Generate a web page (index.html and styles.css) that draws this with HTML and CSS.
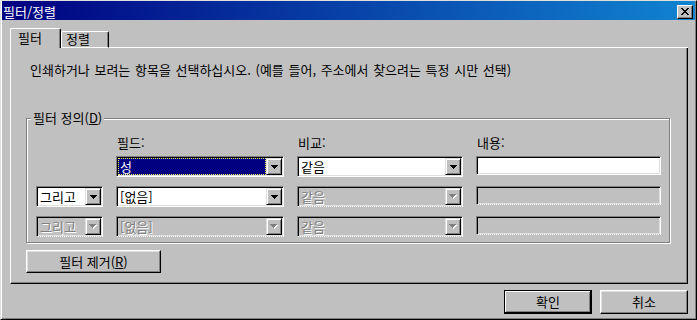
FILE: index.html
```html
<!DOCTYPE html>
<html lang="ko">
<head>
    <meta charset="UTF-8">
    <title>필터/정렬</title>
    <link rel="stylesheet" href="styles.css">
</head>
<body>
    <div class="window">
        <div class="titlebar">
            <span class="title">필터/정렬</span>
            <span class="close-btn">
                <svg width="8" height="7" viewBox="0 0 8 7" shape-rendering="crispEdges"><path fill="#000" d="M0 0h2v1H0zM6 0h2v1H6zM1 1h2v1H1zM5 1h2v1H5zM2 2h4v1H2zM3 3h2v1H3zM2 4h4v1H2zM1 5h2v1H1zM5 5h2v1H5zM0 6h2v1H0zM6 6h2v1H6z"/></svg>
            </span>
        </div>

        <div class="dialog-body">
            <div class="tabs">
                <div class="tab active">필터</div>
                <div class="tab">정렬</div>
                <div class="tab-fill"></div>
            </div>

            <div class="panel">
                <p class="hint">인쇄하거나 보려는 항목을 선택하십시오. (예를 들어, 주소에서 찾으려는 특정 시만 선택)</p>

                <div class="groupbox">
                    <span class="groupbox-title">필터 정의(<u>D</u>)</span>
                    <div class="filter-grid">
                        <span></span>
                        <span class="col-label">필드:</span>
                        <span class="col-label">비교:</span>
                        <span class="col-label">내용:</span>

                        <span></span>
                        <div class="combo focused">
                            <span class="combo-text"><span class="sel">성</span></span>
                            <span class="drop"><svg width="7" height="4" viewBox="0 0 7 4" shape-rendering="crispEdges"><path fill="#000" d="M0 0h7v1H0zM1 1h5v1H1zM2 2h3v1H2zM3 3h1v1H3z"/></svg></span>
                        </div>
                        <div class="combo">
                            <span class="combo-text">같음</span>
                            <span class="drop"><svg width="7" height="4" viewBox="0 0 7 4" shape-rendering="crispEdges"><path fill="#000" d="M0 0h7v1H0zM1 1h5v1H1zM2 2h3v1H2zM3 3h1v1H3z"/></svg></span>
                        </div>
                        <div class="textbox"></div>

                        <div class="combo">
                            <span class="combo-text">그리고</span>
                            <span class="drop"><svg width="7" height="4" viewBox="0 0 7 4" shape-rendering="crispEdges"><path fill="#000" d="M0 0h7v1H0zM1 1h5v1H1zM2 2h3v1H2zM3 3h1v1H3z"/></svg></span>
                        </div>
                        <div class="combo">
                            <span class="combo-text">[없음]</span>
                            <span class="drop"><svg width="7" height="4" viewBox="0 0 7 4" shape-rendering="crispEdges"><path fill="#000" d="M0 0h7v1H0zM1 1h5v1H1zM2 2h3v1H2zM3 3h1v1H3z"/></svg></span>
                        </div>
                        <div class="combo disabled">
                            <span class="combo-text">같음</span>
                            <span class="drop"><svg width="8" height="5" viewBox="0 0 8 5" shape-rendering="crispEdges"><path fill="#fff" d="M1 1h7v1H1zM2 2h5v1H2zM3 3h3v1H3zM4 4h1v1H4z"/><path fill="#808080" d="M0 0h7v1H0zM1 1h5v1H1zM2 2h3v1H2zM3 3h1v1H3z"/></svg></span>
                        </div>
                        <div class="textbox disabled"></div>

                        <div class="combo disabled">
                            <span class="combo-text">그리고</span>
                            <span class="drop"><svg width="8" height="5" viewBox="0 0 8 5" shape-rendering="crispEdges"><path fill="#fff" d="M1 1h7v1H1zM2 2h5v1H2zM3 3h3v1H3zM4 4h1v1H4z"/><path fill="#808080" d="M0 0h7v1H0zM1 1h5v1H1zM2 2h3v1H2zM3 3h1v1H3z"/></svg></span>
                        </div>
                        <div class="combo disabled">
                            <span class="combo-text">[없음]</span>
                            <span class="drop"><svg width="8" height="5" viewBox="0 0 8 5" shape-rendering="crispEdges"><path fill="#fff" d="M1 1h7v1H1zM2 2h5v1H2zM3 3h3v1H3zM4 4h1v1H4z"/><path fill="#808080" d="M0 0h7v1H0zM1 1h5v1H1zM2 2h3v1H2zM3 3h1v1H3z"/></svg></span>
                        </div>
                        <div class="combo disabled">
                            <span class="combo-text">같음</span>
                            <span class="drop"><svg width="8" height="5" viewBox="0 0 8 5" shape-rendering="crispEdges"><path fill="#fff" d="M1 1h7v1H1zM2 2h5v1H2zM3 3h3v1H3zM4 4h1v1H4z"/><path fill="#808080" d="M0 0h7v1H0zM1 1h5v1H1zM2 2h3v1H2zM3 3h1v1H3z"/></svg></span>
                        </div>
                        <div class="textbox disabled"></div>
                    </div>
                </div>

                <button class="btn btn-remove">필터 제거(<u>R</u>)</button>
            </div>

            <div class="actions">
                <button class="btn btn-default">확인</button>
                <button class="btn">취소</button>
            </div>
        </div>
    </div>
</body>
</html>
```

FILE: styles.css
```css
* {
    box-sizing: border-box;
}
body {
    margin: 0;
    font-family: "Noto Sans CJK KR", "Noto Sans", sans-serif;
    font-size: 13px;
    line-height: 14px;
    color: #000;
    background: #c0c0c0;
}
button {
    font: inherit;
    color: inherit;
    margin: 0;
    padding: 0;
}
.window {
    width: 697px;
    height: 320px;
    background: #c0c0c0;
    border-top: 1px solid #dfdfdf;
    border-left: 1px solid #dfdfdf;
    border-right: 1px solid #000;
    border-bottom: 1px solid #000;
    box-shadow: inset 1px 0 #fff, inset -1px -1px #808080;
    padding: 0 1px 1px 1px;
}
.titlebar {
    height: 19px;
    display: flex;
    align-items: center;
    justify-content: space-between;
    padding: 2px 2px 0 1px;
    background: linear-gradient(to right, #000080, #1084d0);
    color: #fff;
}
.close-btn {
    width: 16px;
    height: 14px;
    display: flex;
    align-items: center;
    justify-content: center;
    background: #c0c0c0;
    border: 1px solid;
    border-color: #fff #000 #000 #fff;
    box-shadow: inset -1px -1px #808080;
}
.dialog-body {
    padding: 8px 7px 0 8px;
}
.tabs {
    display: flex;
    align-items: flex-end;
    height: 20px;
}
.tab {
    width: 48px;
    height: 17px;
    padding-left: 4px;
    border-top: 1px solid #fff;
    border-left: 1px solid #fff;
    border-right: 1px solid #000;
    border-bottom: 1px solid #fff;
    border-radius: 2px 2px 0 0;
    box-shadow: inset -1px 0 #808080;
}
.tab.active {
    width: 51px;
    height: 20px;
    padding: 2px 0 0 7px;
    border-bottom: none;
}
.tab-fill {
    flex: 1;
    height: 20px;
    border-bottom: 1px solid #fff;
}
.panel {
    height: 236px;
    border-left: 1px solid #fff;
    border-right: 1px solid #000;
    border-bottom: 1px solid #000;
    box-shadow: inset -1px -1px #808080;
    padding: 15px 0 0 15px;
}
.hint {
    margin: 0 0 0 4px;
    word-spacing: 1px;
}
.groupbox {
    position: relative;
    width: 644px;
    margin-top: 41px;
    border: 1px solid #808080;
    box-shadow: inset 1px 1px #fff, 1px 1px #fff;
    padding: 17px 0 5px 9px;
}
.groupbox-title {
    position: absolute;
    top: -8px;
    left: 4px;
    padding: 0 2px;
    background: #c0c0c0;
}
.filter-grid {
    display: grid;
    grid-template-columns: 67px 168px 166px 185px;
    grid-template-rows: 20px 30px 30px 21px;
    column-gap: 13px;
    align-items: start;
}
.col-label {
    padding-left: 1px;
}
.combo {
    display: flex;
    height: 21px;
    padding: 1px;
    border: 1px solid;
    border-color: #808080 #fff #fff #808080;
    box-shadow: inset 1px 1px #000, inset -1px -1px #dfdfdf;
    background: #fff;
}
.combo-text {
    flex: 1;
    padding-left: 2px;
    line-height: 17px;
    white-space: nowrap;
    overflow: hidden;
}
.combo.focused .combo-text {
    padding-left: 0;
}
.sel {
    display: block;
    height: 17px;
    padding-left: 2px;
    background: #000080;
    color: #fff;
    outline: 1px dotted #ffff60;
    outline-offset: -1px;
}
.drop {
    width: 16px;
    height: 17px;
    display: flex;
    align-items: center;
    justify-content: center;
    background: #c0c0c0;
    border: 1px solid;
    border-color: #dfdfdf #000 #000 #dfdfdf;
    box-shadow: inset 1px 1px #fff, inset -1px -1px #808080;
}
.combo.disabled {
    background: #c0c0c0;
    color: #808080;
    text-shadow: 1px 1px #fff;
    border-bottom-style: dotted;
}
.textbox {
    height: 19px;
    border: 1px solid;
    border-color: #808080 #fff #fff #808080;
    box-shadow: inset 1px 1px #000, inset -1px -1px #dfdfdf;
    background: #fff;
}
.textbox.disabled {
    background: #c0c0c0;
    border-bottom-style: dotted;
}
.btn {
    display: block;
    background: #c0c0c0;
    border: 1px solid;
    border-color: #fff #000 #000 #fff;
    box-shadow: inset -1px -1px #808080, inset 1px 1px #dfdfdf;
    text-align: center;
}
.btn-remove {
    width: 135px;
    height: 23px;
    margin-top: 7px;
}
.actions {
    display: flex;
    justify-content: flex-end;
    gap: 8px;
    margin-top: 6px;
}
.actions .btn {
    width: 88px;
    height: 24px;
}
.btn-default {
    border-color: #000;
    box-shadow: inset -1px -1px #000, inset 1px 1px #fff, inset -2px -2px #808080;
}
```
